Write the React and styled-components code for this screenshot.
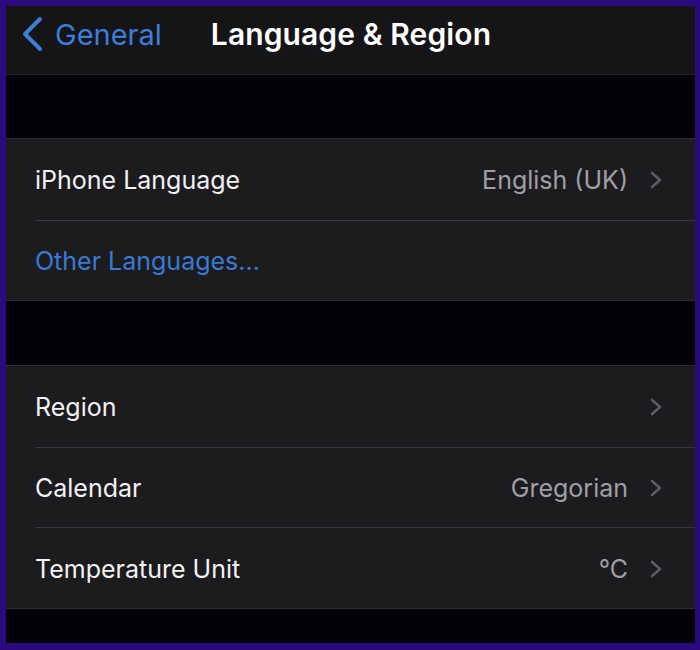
import React from 'react';
import styled, { createGlobalStyle } from 'styled-components';

const GlobalStyle = createGlobalStyle`
  html, body {
    margin: 0;
    padding: 0;
    background: #2a0a7c;
  }
  body {
    font-family: Inter, "Liberation Sans", Arial, sans-serif;
    -webkit-font-smoothing: antialiased;
  }
`;

const Frame = styled.div`
  width: 700px;
  height: 650px;
  box-sizing: border-box;
  padding: 6px 5px 7px 6px;
  background: #2a0a7c;
`;

const Screen = styled.div`
  height: 100%;
  display: flex;
  flex-direction: column;
  background: #030206;
  overflow: hidden;
`;

const Header = styled.div`
  height: 69px;
  flex-shrink: 0;
  box-sizing: border-box;
  padding-bottom: 12px;
  display: flex;
  align-items: center;
  background: #151417;
  border-bottom: 1px solid #242326;
`;

const BackButton = styled.div`
  display: flex;
  align-items: center;
  gap: 10px;
  padding-left: 15px;
  color: #3b7fd9;
  font-size: 29px;
`;

const Title = styled.div`
  margin-left: 49px;
  color: #ffffff;
  font-size: 30px;
  font-weight: 600;
  letter-spacing: 0.1px;
`;

const Spacer = styled.div`
  height: ${(p) => p.$h}px;
  flex-shrink: 0;
`;

const Group = styled.div`
  background: #1c1b1e;
  border-top: 1px solid #2e2d31;
  border-bottom: 1px solid #2e2d31;
  padding-left: 29px;
`;

const Row = styled.div`
  height: 80.5px;
  display: flex;
  align-items: center;
  padding-right: 33px;
  padding-top: 2px;
  box-sizing: border-box;
  border-top: ${(p) => (p.$first ? 'none' : '1px solid #38373b')};
`;

const Label = styled.div`
  flex: 1;
  font-size: 25px;
  color: ${(p) => (p.$link ? '#3a7ad4' : '#f2f2f4')};
`;

const Value = styled.div`
  font-size: 25px;
  color: #a09fa5;
  margin-right: 22px;
`;

const Chevron = () => (
  <svg width="12" height="18" viewBox="0 0 12 18">
    <path d="M2 2 L10 9 L2 16" fill="none" stroke="#5d5c61" strokeWidth="2.6" strokeLinecap="round" strokeLinejoin="round" />
  </svg>
);

const BackChevron = () => (
  <svg width="24" height="36" viewBox="0 0 24 36">
    <path d="M19 3 L4 18 L19 33" fill="none" stroke="#3b7fd9" strokeWidth="4" strokeLinecap="round" strokeLinejoin="round" />
  </svg>
);

const SettingRow = ({ label, value, first, link, chevron = true }) => (
  <Row $first={first}>
    <Label $link={link}>{label}</Label>
    {value !== undefined && <Value>{value}</Value>}
    {chevron && <Chevron />}
  </Row>
);

export default function App() {
  return (
    <>
      <GlobalStyle />
      <Frame>
        <Screen>
          <Header>
            <BackButton>
              <BackChevron />
              General
            </BackButton>
            <Title>Language &amp; Region</Title>
          </Header>
          <Spacer $h={63} />
          <Group>
            <SettingRow first label="iPhone Language" value="English (UK)" />
            <SettingRow label="Other Languages..." link chevron={false} />
          </Group>
          <Spacer $h={64} />
          <Group>
            <SettingRow first label="Region" value="" />
            <SettingRow label="Calendar" value="Gregorian" />
            <SettingRow label="Temperature Unit" value="°C" />
          </Group>
        </Screen>
      </Frame>
    </>
  );
}
